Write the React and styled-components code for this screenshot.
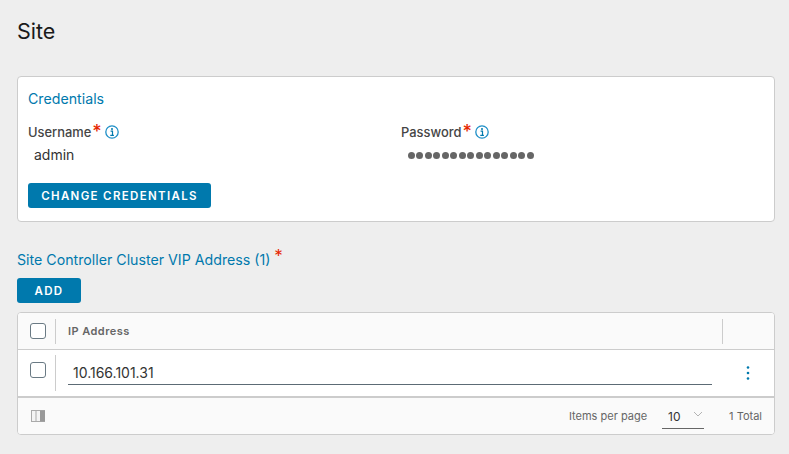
import styled, { createGlobalStyle } from "styled-components";

const Global = createGlobalStyle`
  html, body { margin: 0; padding: 0; background: #eeeeee; }
  body { font-family: Inter, "Liberation Sans", sans-serif; overflow: hidden; }
`;

const Page = styled.div`
  width: 789px;
  height: 454px;
  box-sizing: border-box;
  padding: 18px 14px 0 17px;
`;

const Title = styled.h1`
  margin: 0 0 32px;
  font-size: 21.5px;
  line-height: 26px;
  font-weight: 400;
  color: #1a1a1a;
`;

const Card = styled.section`
  box-sizing: border-box;
  height: 146px;
  padding: 13px 10px 0;
  background: #fff;
  border: 1px solid #cccccc;
  border-radius: 4px;
`;

const CardTitle = styled.h2`
  margin: 0 0 15px;
  font-size: 14.2px;
  line-height: 18px;
  font-weight: 400;
  color: #0079ad;
`;

const Fields = styled.div`
  display: grid;
  grid-template-columns: 373px 1fr;
`;

const Field = styled.div`
  display: flex;
  flex-direction: column;
`;

const LabelRow = styled.div`
  display: flex;
  align-items: center;
  height: 18px;
  font-size: 12.9px;
  font-weight: 500;
  color: #454545;
`;

const Star = styled.span`
  align-self: flex-start;
  margin-left: 1px;
  font-size: 18px;
  line-height: 17px;
  color: #e62700;
`;

const Info = styled.svg`
  width: 14px;
  height: 14px;
  margin-left: 3px;
`;

const Value = styled.div`
  margin-top: 4px;
  padding-left: 6px;
  height: 20px;
  font-size: 14px;
  line-height: 20px;
  color: #333333;
`;

const Dots = styled.div`
  display: flex;
  gap: 1.47px;
  margin-top: 4px;
  padding-left: 7px;
  height: 20px;
  align-items: center;
`;

const Dot = styled.span`
  width: 7px;
  height: 7px;
  border-radius: 50%;
  background: #666666;
`;

const Button = styled.button`
  display: block;
  height: 25px;
  width: ${(p) => p.$w}px;
  padding: 0;
  border: 0;
  border-radius: 3px;
  background: #0079ad;
  color: #fff;
  font-family: inherit;
  font-size: 11.5px;
  font-weight: 600;
  letter-spacing: 1.33px;
  text-transform: uppercase;
`;

const CredentialsButton = styled(Button)`
  margin-top: 18px;
`;

const SectionTitle = styled.h2`
  display: flex;
  margin: 28px 0 8px;
  height: 20px;
  font-size: 14.2px;
  line-height: 20px;
  font-weight: 400;
  color: #0079ad;
`;

const SectionStar = styled(Star)`
  margin-left: 4px;
  margin-top: -2px;
  font-size: 17px;
`;

const Table = styled.div`
  margin-top: 9px;
  background: #fff;
  border: 1px solid #cccccc;
  border-radius: 4px;
  overflow: hidden;
`;

const Row = styled.div`
  display: grid;
  box-sizing: border-box;
  grid-template-columns: 38px 1fr 52px;
  align-items: center;
  height: ${(p) => p.$h}px;
  background: ${(p) => p.$bg};
  border-bottom: ${(p) => p.$line};
`;

const CheckCell = styled.div`
  display: flex;
  align-items: center;
  height: ${(p) => p.$h}px;
  justify-content: center;
  border-right: 1px solid #cccccc;
`;

const Check = styled.span`
  display: block;
  box-sizing: border-box;
  width: 16px;
  height: 16px;
  margin-left: 2px;
  margin-top: ${(p) => p.$top || 0}px;
  background: #fff;
  border: 1px solid #6a7a84;
  border-radius: 3px;
`;

const HeadText = styled.div`
  padding-left: 12px;
  font-size: 11px;
  font-weight: 600;
  letter-spacing: 0.45px;
  color: #666666;
`;

const EndCell = styled.div`
  display: flex;
  align-items: center;
  justify-content: center;
  height: ${(p) => p.$h}px;
  border-left: ${(p) => p.$line || "0"};
`;

const IpInput = styled.div`
  box-sizing: border-box;
  height: 24px;
  margin: 0 10px 0 12px;
  padding-left: 5px;
  border-bottom: 1px solid #5c6b75;
  font-size: 14px;
  line-height: 23px;
  color: #333333;
`;

const Footer = styled.div`
  display: flex;
  align-items: center;
  height: 36px;
  padding: 0 12px 0 13px;
  background: #fafafa;
  font-size: 11px;
  color: #666666;
`;

const PerPage = styled.div`
  display: flex;
  align-items: center;
  box-sizing: border-box;
  width: 42px;
  height: 24px;
  margin: 2px 25px 0 15px;
  padding-left: 6px;
  border-bottom: 1px solid #666666;
  font-size: 12px;
  color: #333333;
`;

const Spacer = styled.div`
  flex: 1;
`;

function InfoIcon() {
  return (
    <Info viewBox="0 0 14 14">
      <circle cx="7" cy="7" r="6.2" fill="none" stroke="#1f8fc7" strokeWidth="1.3" />
      <circle cx="7" cy="4" r="1" fill="#0079ad" />
      <path d="M5.6 6.2H7.5V10.2M5.3 10.4H8.9" fill="none" stroke="#0079ad" strokeWidth="1.2" />
    </Info>
  );
}

export default function App() {
  return (
    <Page>
      <Global />
      <Title>Site</Title>
      <Card>
        <CardTitle>Credentials</CardTitle>
        <Fields>
          <Field>
            <LabelRow>
              Username<Star>*</Star>
              <InfoIcon />
            </LabelRow>
            <Value>admin</Value>
          </Field>
          <Field>
            <LabelRow>
              Password<Star>*</Star>
              <InfoIcon />
            </LabelRow>
            <Dots>
              {Array.from({ length: 15 }, (_, i) => (
                <Dot key={i} />
              ))}
            </Dots>
          </Field>
        </Fields>
        <CredentialsButton $w={183}>Change Credentials</CredentialsButton>
      </Card>
      <SectionTitle>
        Site Controller Cluster VIP Address (1)<SectionStar>*</SectionStar>
      </SectionTitle>
      <Button $w={64}>Add</Button>
      <Table>
        <Row $h={37} $bg="#fafafa" $line="1px solid #cccccc">
          <CheckCell $h={25}>
            <Check />
          </CheckCell>
          <HeadText>IP Address</HeadText>
          <EndCell $h={25} $line="1px solid #cccccc" />
        </Row>
        <Row $h={48} $bg="#fff" $line="2px solid #cccccc">
          <CheckCell $h={36}>
            <Check $top={-6} />
          </CheckCell>
          <IpInput>10.166.101.31</IpInput>
          <EndCell $h={36}>
            <svg width="4" height="16" viewBox="0 0 4 16">
              <circle cx="2" cy="2.5" r="1.3" fill="#0079ad" />
              <circle cx="2" cy="8" r="1.3" fill="#0079ad" />
              <circle cx="2" cy="13.5" r="1.3" fill="#0079ad" />
            </svg>
          </EndCell>
        </Row>
        <Footer>
          <svg width="14" height="12" viewBox="0 0 14 12">
            <rect x="0.5" y="0.5" width="13" height="11" fill="#f4f4f4" stroke="#aaa" />
            <path d="M5 0.5V11.5" stroke="#aaa" />
            <rect x="9" y="0.5" width="5" height="11" fill="#999" />
          </svg>
          <Spacer />
          Items per page
          <PerPage>
            10
            <svg width="10" height="6" viewBox="0 0 10 6" style={{ marginLeft: 12, marginTop: -6 }}>
              <path d="M1 1L5 5L9 1" fill="none" stroke="#b3b3b3" />
            </svg>
          </PerPage>
          1 Total
        </Footer>
      </Table>
    </Page>
  );
}
